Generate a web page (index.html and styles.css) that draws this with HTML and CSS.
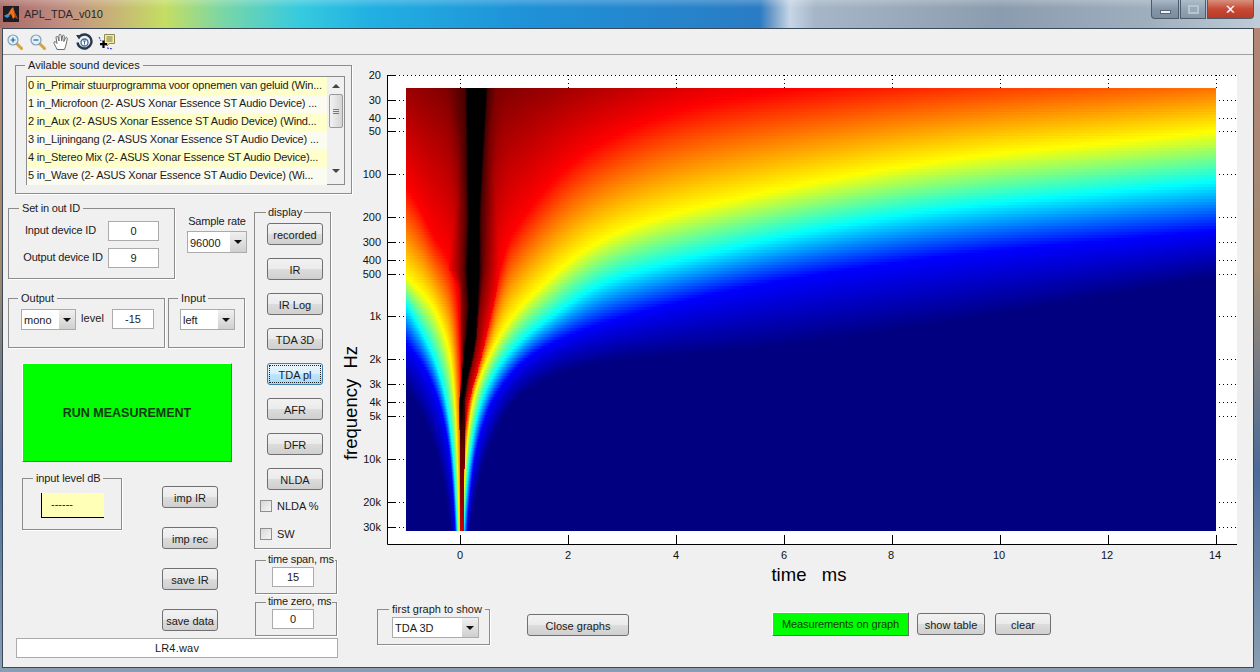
FILE: index.html
```html
<!DOCTYPE html>
<html lang="en">
<head>
<meta charset="utf-8">
<title>APL_TDA_v010</title>
<link rel="stylesheet" href="styles.css">
</head>
<body>
<div class="window">
  <header class="titlebar">
    <svg class="app-logo" width="16" height="16" viewBox="0 0 16 16">
      <rect width="16" height="16" fill="#1c1c22"/>
      <path d="M1 10 L5 8 L8 3 L10 1 L12 7 L15 13 L12 11 L10 13 L8 8 L5 10 Z" fill="#e8741c"/>
      <path d="M1 10 L5 8 L7 10 L4 12 Z" fill="#3f8fd0"/>
      <path d="M10 1 L12 7 L15 13 L12 11 Z" fill="#b83a14"/>
    </svg>
    <span class="title-text">APL_TDA_v010</span>
    <div class="win-buttons">
      <div class="win-btn win-min"><span class="min-glyph"></span></div>
      <div class="win-btn win-max"><span class="max-glyph"></span></div>
      <div class="win-btn win-close">&#x2715;</div>
    </div>
  </header>

  <div class="client">
    <div class="toolbar">
      <svg class="tool" width="18" height="18" viewBox="0 0 18 18">
        <path d="M10.5 10.5 L15.500 15.500" stroke="#d9a13c" stroke-width="3" stroke-linecap="round"/>
        <circle cx="7" cy="7" r="5" fill="#e4f1fa" stroke="#7d9fba" stroke-width="1.200"/>
        <path d="M4.500 7 H9.500 M7 4.500 V9.500" stroke="#2a5c94" stroke-width="1.200"/>
      </svg>
      <svg class="tool" width="18" height="18" viewBox="0 0 18 18">
        <path d="M10.5 10.5 L15.500 15.500" stroke="#d9a13c" stroke-width="3" stroke-linecap="round"/>
        <circle cx="7" cy="7" r="5" fill="#e4f1fa" stroke="#7d9fba" stroke-width="1.200"/>
        <path d="M4.500 7 H9.500" stroke="#2a5c94" stroke-width="1.200"/>
      </svg>
      <svg class="tool" width="18" height="18" viewBox="0 0 18 18">
        <path d="M5 16.500 C4 13.500 1.500 10.500 2 9 C2.700 8 4 9 5 10.500 L4 4.500 C4 3 5.800 3 6 4.500 L7 8 L7 2.500 C7 1 9 1 9.200 2.500 L9.700 8 L10.500 3 C10.800 1.700 12.500 2 12.300 3.500 L11.800 8.500 L13.500 5 C14 3.800 15.700 4.500 15.200 6 C14.500 9 14 13 12.500 16.500 Z" fill="#fff" stroke="#6a6a6a" stroke-width="1"/>
      </svg>
      <svg class="tool" width="18" height="18" viewBox="0 0 18 18">
        <path d="M4.500 3.500 A7 7 0 1 1 2.500 9.500" fill="none" stroke="#26384c" stroke-width="2.400"/>
        <path d="M1 2 L7 2 L4 6.500 Z" fill="#26384c"/>
        <circle cx="9.500" cy="9.500" r="3.500" fill="#fff" stroke="#3d6a96" stroke-width="1.300"/>
        <path d="M8 8 H11 M9.500 8 V11.500" stroke="#3d6a96" stroke-width="1"/>
      </svg>
      <svg class="tool" width="18" height="18" viewBox="0 0 18 18">
        <path d="M6.500 1.500 H16.500 V10.500 H11 L9 13 V10.500 H6.500 Z" fill="#f6eda0" stroke="#8f8a50" stroke-width="1"/>
        <path d="M8.500 4 H14.500 M8.500 6 H14.500 M8.500 8 H14.500" stroke="#77744a" stroke-width="1"/>
        <path d="M1 4 L3 8 M9 15 L15 16" stroke="#2030c0" stroke-width="1" stroke-dasharray="2 1"/>
        <path d="M5.500 7.500 V15 M2 11.200 H9" stroke="#000" stroke-width="2.200"/>
      </svg>
    </div>

    <div class="main">
      <section class="left">
        <div class="group devices">
          <span class="legend">Avilable sound devices</span>
          <div class="listbox">
            <ul class="list-rows">
              <li>0 in_Primair stuurprogramma voor opnemen van geluid (Win...</li>
              <li>1 in_Microfoon (2- ASUS Xonar Essence ST Audio Device) ...</li>
              <li>2 in_Aux (2- ASUS Xonar Essence ST Audio Device) (Wind...</li>
              <li>3 in_Lijningang (2- ASUS Xonar Essence ST Audio Device) ...</li>
              <li>4 in_Stereo Mix (2- ASUS Xonar Essence ST Audio Device)...</li>
              <li>5 in_Wave (2- ASUS Xonar Essence ST Audio Device) (Wi...</li>
            </ul>
            <div class="scrollbar">
              <span class="sb-up"></span>
              <div class="sb-thumb"><i></i><i></i><i></i></div>
              <span class="sb-down"></span>
            </div>
          </div>
        </div>

        <div class="mid">
          <div class="col-a">
            <div class="row-ids">
              <div class="group ids">
                <span class="legend">Set in out ID</span>
                <div class="id-row"><label class="id-label">Input device ID</label><input class="field field-id" value="0"></div>
                <div class="id-row"><label class="id-label id-label-out">Output device ID</label><input class="field field-id" value="9"></div>
              </div>
              <div class="rate">
                <span class="rate-label">Sample rate</span>
                <div class="select select-rate"><span>96000</span><b class="arrow"></b></div>
              </div>
            </div>

            <div class="row-io">
              <div class="group output">
                <span class="legend">Output</span>
                <div class="select select-mono"><span>mono</span><b class="arrow"></b></div>
                <span class="level-label">level</span>
                <input class="field field-level" value="-15">
              </div>
              <div class="group input-group">
                <span class="legend">Input</span>
                <div class="select select-mono"><span>left</span><b class="arrow"></b></div>
              </div>
            </div>

            <button class="run">RUN MEASUREMENT</button>

            <div class="row-level">
              <div class="group level">
                <span class="legend">input level dB</span>
                <div class="level-box">------</div>
              </div>
              <div class="side-buttons">
                <button class="btn btn-side">imp IR</button>
                <button class="btn btn-side">imp rec</button>
                <button class="btn btn-side">save IR</button>
                <button class="btn btn-side">save data</button>
              </div>
            </div>
          </div>

          <div class="col-b">
            <div class="group display">
              <span class="legend">display</span>
              <div class="display-buttons">
                <button class="btn btn-side">recorded</button>
                <button class="btn btn-side">IR</button>
                <button class="btn btn-side">IR Log</button>
                <button class="btn btn-side">TDA 3D</button>
                <button class="btn btn-side btn-active">TDA pl</button>
                <button class="btn btn-side">AFR</button>
                <button class="btn btn-side">DFR</button>
                <button class="btn btn-side">NLDA</button>
              </div>
              <div class="checks">
                <div class="check"><span class="box"></span>NLDA %</div>
                <div class="check"><span class="box"></span>SW</div>
              </div>
            </div>
            <div class="group time time-span">
              <span class="legend">time span, ms</span>
              <input class="field field-level" value="15">
            </div>
            <div class="group time time-zero">
              <span class="legend">time zero, ms</span>
              <input class="field field-level" value="0">
            </div>
          </div>
        </div>

        <div class="filebar">LR4.wav</div>
      </section>

      <section class="right">
        <div class="plot">
          <svg class="axes" width="905" height="530" viewBox="348 55 905 530">
            <rect x="387" y="75" width="850" height="469" fill="#fff"/>
            <g class="grid">
              <path d="M387 75.500H1237M387 100.500H1237M387 118.500H1237M387 131.500H1237M387 174.500H1237M387 217.500H1237M387 242.500H1237M387 260.500H1237M387 274.500H1237M387 316.500H1237M387 359.500H1237M387 384.500H1237M387 402.500H1237M387 416.500H1237M387 459.500H1237M387 502.500H1237M387 527.500H1237"/>
              <path d="M460.500 75V88M568.500 75V88M676.500 75V88M784.500 75V88M892.500 75V88M1000.500 75V88M1108.500 75V88M1216.500 75V88"/>
            </g>
            <g class="ticks">
              <path d="M387 75.500H396M387 100.500H395M387 118.500H395M387 131.500H395M387 174.500H395M387 217.500H395M387 242.500H395M387 260.500H395M387 274.500H395M387 316.500H395M387 359.500H395M387 384.500H395M387 402.500H395M387 416.500H395M387 459.500H395M387 502.500H395M387 527.500H395"/>
              <path d="M460.500 544V535M568.500 544V535M676.500 544V535M784.500 544V535M892.500 544V535M1000.500 544V535M1108.500 544V535M1216.500 544V535"/>
              <path d="M387.500 75V544.500H1237"/>
            </g>
            <g class="ylabels">
              <text x="381" y="79">20</text><text x="381" y="104">30</text><text x="381" y="122">40</text><text x="381" y="135">50</text>
              <text x="381" y="178">100</text><text x="381" y="221">200</text><text x="381" y="246">300</text><text x="381" y="264">400</text><text x="381" y="278">500</text>
              <text x="381" y="320">1k</text><text x="381" y="363">2k</text><text x="381" y="388">3k</text><text x="381" y="406">4k</text><text x="381" y="420">5k</text>
              <text x="381" y="463">10k</text><text x="381" y="506">20k</text><text x="381" y="531">30k</text>
            </g>
            <g class="xlabels">
              <text x="460" y="559">0</text><text x="568" y="559">2</text><text x="676" y="559">4</text><text x="784" y="559">6</text>
              <text x="891" y="559">8</text><text x="999" y="559">10</text><text x="1107" y="559">12</text><text x="1215" y="559">14</text>
            </g>
            <text class="axis-title" x="809" y="581">time&#160;&#160; ms</text>
            <text class="axis-title" transform="translate(357 403) rotate(-90)">frequency&#160; Hz</text>
          </svg>
          <canvas id="heatmap" class="heatmap" width="810" height="443"></canvas>
        </div>

        <div class="bottom-row">
          <div class="group first-graph">
            <span class="legend">first graph to show</span>
            <div class="select select-graph"><span>TDA 3D</span><b class="arrow"></b></div>
          </div>
          <button class="btn btn-close">Close graphs</button>
          <button class="measure">Measurements on graph</button>
          <button class="btn btn-table">show table</button>
          <button class="btn btn-clear">clear</button>
        </div>
      </section>
    </div>
  </div>
</div>
<script src="heatmap.js"></script>
</body>
</html>
```

FILE: styles.css
```css
* { box-sizing: border-box; }
html, body { margin: 0; padding: 0; }
body {
  width: 1260px;
  height: 672px;
  overflow: hidden;
  font-family: "Liberation Sans", Arial, sans-serif;
  font-size: 11px;
  color: #1a1a1a;
}
button, input { font-family: inherit; font-size: 11px; color: #1a1a1a; margin: 0; }

.window {
  width: 1260px;
  height: 672px;
  display: flex;
  flex-direction: column;
  background: linear-gradient(180deg, #b58578 0%, #a08a70 40%, #4a6a98 70%, #8a9fb4 100%);
}
.titlebar {
  height: 28px;
  flex: none;
  display: flex;
  align-items: flex-start;
  padding-left: 3px;
  background:
    linear-gradient(180deg, rgba(255,255,255,.22) 0, rgba(255,255,255,0) 8px),
    linear-gradient(90deg, #a86a66 0, #c08c80 60px, #c8b078 110px, #c4de62 165px, #78d6a8 225px, #36cadf 300px, #22b0e2 370px, #1f92d8 520px, #2a7cc4 760px, #6f9cc8 772px, #c6d6e6 790px, #a6b6c6 815px, #8b9cae 1000px, #a0afbe 1150px, #c0ccd8 1260px);
}
.app-logo { margin-top: 6px; flex: none; }
.title-text { margin: 7px 0 0 5px; font-size: 11px; line-height: 14px; color: #26262a; }
.win-buttons { margin-left: auto; margin-right: 6px; display: flex; gap: 1px; height: 19px; }
.win-btn {
  height: 19px;
  border: 1px solid #4e5a68;
  border-top: 0;
  display: flex;
  align-items: center;
  justify-content: center;
}
.win-min { width: 28px; border-bottom-left-radius: 4px; background: linear-gradient(180deg, #aab8c6, #8496a8 50%, #7a8c9e); }
.win-max { width: 26px; background: linear-gradient(180deg, #b0bdc9, #93a4b4 50%, #8596a6); }
.win-close {
  width: 47px;
  border-bottom-right-radius: 4px;
  background: linear-gradient(180deg, #d8907c, #c84a34 50%, #b83a28);
  color: #fff;
  font-size: 13px;
  font-weight: bold;
  font-family: "DejaVu Sans", sans-serif;
}
.min-glyph { width: 11px; height: 4px; margin-top: 5px; background: #eef2f6; border: 1px solid #5a6672; }
.max-glyph { width: 11px; height: 9px; border: 2px solid #b8c4ce; background: #9aa9b7; }

.client {
  width: 1252px;
  height: 640px;
  margin-left: 2px;
  border: 1px solid #3c4a58;
  background: #f0f0f0;
  display: flex;
  flex-direction: column;
}
.toolbar {
  height: 26px;
  flex: none;
  display: flex;
  align-items: center;
  gap: 5px;
  padding-left: 3px;
  border-bottom: 1px solid #a0a0a0;
}
.tool { flex: none; }
.main { flex: 1; display: flex; min-height: 0; }
.left { width: 345px; flex: none; }
.right { width: 905px; flex: none; }

.group { position: relative; border: 1px solid #8c8c8c; box-shadow: 1px 1px 0 #fff; }
.legend {
  position: absolute;
  top: -7px;
  left: 9px;
  padding: 0 3px;
  background: #f0f0f0;
  line-height: 13px;
  white-space: nowrap;
}

.devices { width: 337px; height: 129px; margin: 10px 0 0 12px; padding: 10px 0 0 10px; }
.devices .legend { left: 9px; }
.listbox { width: 319px; height: 109px; border: 1px solid #8c8c8c; display: flex; background: #fff; }
.list-rows { flex: 1; list-style: none; margin: 0; padding: 0; min-width: 0; }
.list-rows li {
  height: 18px;
  line-height: 16px;
  padding-left: 1px;
  white-space: nowrap;
  overflow: hidden;
  letter-spacing: -.17px;
  background: #fbfbf0;
}
.list-rows li:nth-child(odd) { background: #ffffcc; }
.scrollbar { width: 17px; flex: none; background: #f0f0f0; display: flex; flex-direction: column; align-items: center; }
.sb-up, .sb-down { width: 0; height: 0; border: 4px solid transparent; }
.sb-up { border-top: 0; border-bottom-color: #444; margin-top: 7px; }
.sb-down { border-bottom: 0; border-top-color: #444; margin-top: 41px; }
.sb-thumb {
  width: 14px;
  height: 34px;
  margin-top: 6px;
  border: 1px solid #9a9a9a;
  border-radius: 2px;
  background: linear-gradient(90deg, #f2f2f2, #d4d4d4);
  display: flex;
  flex-direction: column;
  align-items: center;
  justify-content: center;
  gap: 1px;
}
.sb-thumb i { width: 6px; height: 1px; background: #777; }

.mid { display: flex; margin: 14px 0 0 5px; }
.col-a { width: 239px; flex: none; }
.col-b { width: 83px; flex: none; margin: 4px 0 0 7px; }

.row-ids { display: flex; }
.ids { width: 167px; height: 71px; padding: 12px 15px 0 8px; }
.ids .legend { left: 10px; letter-spacing: -.2px; }
.id-row { display: flex; align-items: center; margin-bottom: 7px; }
.id-label { flex: 1; margin-bottom: 3px; text-align: center; letter-spacing: -.15px; white-space: nowrap; }
.id-label-out { padding-left: 5px; }
.field { border: 1px solid #ababab; background: #fff; text-align: center; padding: 0; outline: 0; }
.field-id { width: 51px; height: 20px; margin-left: 4px; flex: none; }
.rate { width: 60px; margin-left: 12px; }
.rate-label { display: block; height: 23px; line-height: 26px; white-space: nowrap; text-align: center; letter-spacing: -.15px; }

.select {
  display: flex;
  align-items: stretch;
  background: #fff;
  border: 1px solid #ababab;
  line-height: 20px;
  padding-left: 2px;
}
.select span { flex: 1; }
.arrow {
  width: 16px;
  flex: none;
  position: relative;
  background: linear-gradient(180deg, #f0f0f0, #cfcfcf);
}
.arrow::after {
  content: "";
  position: absolute;
  top: 8px;
  left: 4px;
  border: 4px solid transparent;
  border-bottom: 0;
  border-top-color: #111;
}
.select-rate { height: 22px; line-height: 22px; }
.select-mono { width: 55px; height: 21px; }
.select-graph { width: 87px; height: 21px; font-size: 11px; }

.row-io { display: flex; margin-top: 19px; }
.output { width: 157px; height: 50px; margin-right: 3px; padding: 10px 0 0 12px; display: flex; align-items: flex-start; }
.level-label { margin: 2px 0 0 5px; width: 31px; line-height: 14px; letter-spacing: .1px; }
.field-level { width: 42px; height: 20px; flex: none; }
.input-group { width: 77px; height: 50px; padding: 10px 0 0 11px; }

.run {
  display: block;
  width: 210px;
  height: 99px;
  margin: 15px 0 0 14px;
  padding: 0;
  background: #00ff00;
  border: 1px solid;
  border-color: #fff #6a6a6a #6a6a6a #fff;
  font-size: 12.500px;
  font-weight: bold;
  color: #103a10;
}

.row-level { display: flex; margin-top: 16px; }
.level { width: 100px; height: 52px; margin-left: 14px; padding: 14px 0 0 18px; flex: none; }
.level .legend { left: 10px; letter-spacing: -.12px; }
.level-box {
  width: 63px;
  height: 25px;
  padding-left: 9px;
  line-height: 22px;
  background: #ffffb8;
  border-left: 1px solid #000;
  border-bottom: 1px solid #000;
}
.side-buttons { width: 56px; margin: 8px 0 0 40px; display: flex; flex-direction: column; gap: 19px; }

.btn {
  height: 22px;
  padding: 2px 0 0;
  border: 1px solid #707070;
  border-radius: 3px;
  background: linear-gradient(180deg, #f2f2f2 0, #ebebeb 48%, #dcdcdc 52%, #cfcfcf 100%);
  white-space: nowrap;
}
.btn-side { width: 56px; flex: none; }
.btn-active {
  border-color: #3c7fb1;
  background: linear-gradient(180deg, #eaf6fd 0, #d9f0fc 48%, #bee6fd 52%, #a7d9f5 100%);
  outline: 1px dotted #222;
  outline-offset: -3px;
}

.display { width: 77px; height: 337px; padding: 10px 0 0 12px; }
.display .legend { left: 11px; padding: 0 2px; }
.display-buttons { display: flex; flex-direction: column; gap: 13px; }
.checks { margin: 10px 0 0 -7px; display: flex; flex-direction: column; gap: 16px; }
.check { display: flex; align-items: center; height: 12px; gap: 5px; white-space: nowrap; }
.box { width: 12px; height: 12px; border: 1px solid #8e8f8f; background: linear-gradient(135deg, #d8d8d8, #f6f6f6); flex: none; }

.time { width: 82px; height: 34px; margin-left: 1px; padding: 6px 0 0 16px; }
.time .legend { left: 10px; top: -8px; padding: 0 1px 0 2px; letter-spacing: -.2px; }
.time-span { margin-top: 11px; }
.time-zero { margin-top: 8px; }

.filebar {
  width: 322px;
  height: 20px;
  margin: 2px 0 0 13px;
  border: 1px solid #ababab;
  background: #fff;
  text-align: center;
  line-height: 18px;
  letter-spacing: .2px;
}

.plot { position: relative; height: 530px; }
.axes { display: block; overflow: visible; }
.heatmap { position: absolute; left: 58px; top: 33px; display: block; }
.grid path { fill: none; stroke: #000; stroke-width: 1; stroke-dasharray: 1 3; }
.ticks path { fill: none; stroke: #000; stroke-width: 1; }
.ylabels text { font-size: 11px; text-anchor: end; fill: #111; }
.xlabels text { font-size: 11px; text-anchor: middle; fill: #111; }
.axis-title { font-size: 18.500px; text-anchor: middle; fill: #000; }

.bottom-row { display: flex; align-items: flex-start; margin-top: 24px; }
.first-graph { width: 113px; height: 36px; margin-left: 29px; padding: 7px 0 0 14px; flex: none; }
.first-graph .legend { left: 11px; }
.btn-close { width: 102px; margin: 5px 0 0 37px; flex: none; }
.measure {
  width: 137px;
  height: 24px;
  margin: 3px 0 0 143px;
  padding: 0;
  flex: none;
  background: #00ff00;
  border: 1px solid;
  border-color: #fff #6a6a6a #6a6a6a #fff;
  letter-spacing: -.1px;
  color: #123c12;
}
.btn-table { width: 68px; margin: 4px 0 0 8px; flex: none; }
.btn-clear { width: 56px; margin: 4px 0 0 10px; flex: none; }
```

FILE: heatmap.js
```js
// Decay map. Side contours: [distance from t=0 in px, page y] where a colour-map value is reached.
(function () {
  var X0 = 406, Y0 = 88;
  var canvas = document.getElementById('heatmap');
  var ctx = canvas.getContext('2d');
  var W = canvas.width, H = canvas.height;

  var LEVELS = [0, .125, .375, .625, .875, 1];
  var RIGHT = [
    [[10,527],[27,455],[50,405],[100,372],[160,360],[300,350],[434,333],[541,315],[649,297],[756,276],[3540,88]],
    [[7,527],[15,455],[30,405],[70,355],[110,335],[180,312],[220,302],[327,279],[434,263],[541,249],[649,240],[756,233],[1940,135],[2740,88]],
    [[4,527],[10,455],[20,405],[47,355],[95,315],[137,285],[173,272],[220,261],[327,236],[434,215],[541,202],[649,192],[756,182],[1340,135],[1940,88]],
    [[2.7,527],[6,455],[12,405],[30,355],[62,305],[87,282],[120,252],[173,225],[220,212],[327,188],[434,167],[541,152],[649,142],[756,135],[1090,88]],
    [[1.5,527],[3,455],[8,405],[22,355],[37,290],[42,252],[73,205],[113,160],[230,105],[340,88]],
    [[1.2,527],[4,405],[13,355],[20,305],[25,268],[28,200],[30,140],[37,88],[100,60],[300,20]]
  ];
  var LEFT = [
    [[11,527],[24,455],[55,388],[120,300],[1000,88]],
    [[6,527],[11,455],[21,405],[44,355],[55,345],[200,200],[800,88]],
    [[4,527],[8,455],[14,405],[28,355],[41,330],[54,305],[150,230],[500,88]],
    [[2,527],[4,455],[6,405],[11,355],[18,330],[29,305],[55,278],[150,200],[400,88]],
    [[.3,400],[1.5,330],[5,285],[29,235],[56,185],[160,88]],
    [[.3,230],[2,150],[4,140],[15,88],[60,60]]
  ];

  var L4 = [[88,300],[185,406],[235,433],[285,457],[315,460],[355,462],[405,459],[455,460],[527,460]];
  var DL = [[88,447],[140,458],[200,462],[270,461],[315,463],[355,463],[405,459.5],[527,460.2]];
  var CL = [[88,468],[174,469],[217,470],[270,468],[305,470],[335,468],[355,465],[380,462],[400,460.5],[527,460.5]];
  var CR = [[88,485],[174,480],[217,478],[270,478],[305,476],[335,474],[355,471],[380,465],[400,462],[527,461]];
  var DR = [[88,497],[140,490],[200,488],[268,485],[305,480],[355,473],[405,464],[527,461.2]];
  var R4 = [[88,800],[105,690],[152,600],[205,533],[252,502],[290,497],[355,482],[405,468],[455,463],[527,461.5]];
  var PEAK = [[88,1.4],[395,1.4],[450,1.06],[527,0.93]];

  function lin(list, t) {
    for (var i = 1; i < list.length; i++) {
      if (t <= list[i][0] || i === list.length - 1) {
        var a = list[i - 1], b = list[i];
        return a[1] + (b[1] - a[1]) * (t - a[0]) / (b[0] - a[0]);
      }
    }
  }
  function logTable(list) {
    return list.map(function (p) { return [Math.log(p[0]), p[1]]; });
  }
  function smooth(table, ld) {
    var s = 0;
    for (var k = -4; k <= 4; k++) s += lin(table, ld + k * 0.05);
    return s / 9;
  }
  function clamp(v) { return v < 0 ? 0 : v > 1 ? 1 : v; }

  var rightT = RIGHT.map(logTable), leftT = LEFT.map(logTable);

  function columnContours(x) {
    var left = x < 461;
    var d = Math.max(0.3, left ? 461 - x : x - 460);
    var tables = left ? leftT : rightT;
    var ld = Math.log(d), ys = [], prev = Infinity;
    for (var i = 0; i < tables.length; i++) {
      var y = Math.min(prev - 0.01, smooth(tables[i], ld));
      ys.push(y);
      prev = y;
    }
    return ys;
  }
  function sideValue(ys, y) {
    if (y >= ys[0]) return 0;
    for (var i = 1; i < ys.length; i++) {
      if (y >= ys[i]) return LEVELS[i] + (LEVELS[i - 1] - LEVELS[i]) * (y - ys[i]) / (ys[i - 1] - ys[i]);
    }
    return 1;
  }
  function coreValue(x, a, v) {
    if (x <= a[0] || x >= a[a.length - 1]) return 0;
    for (var j = 1; j < a.length; j++) {
      if (x <= a[j]) return v[j - 1] + (v[j] - v[j - 1]) * (x - a[j - 1]) / (a[j] - a[j - 1]);
    }
    return 0;
  }

  var cols = [];
  for (var c = 0; c < W; c++) cols.push(columnContours(X0 + c + 0.5));

  var img = ctx.createImageData(W, H);
  for (var row = 0; row < H; row += 3) {
    var y = Y0 + row + 1;
    var peak = lin(PEAK, y), cl = lin(CL, y), cr = lin(CR, y);
    var dl = lin(DL, y), dr = lin(DR, y);
    var halo = Math.min(peak, 1.14), edge = Math.min(1, Math.max(peak, .875));
    var a = [Math.max(lin(L4, y), dl - 12), dl, cl - 3, cl, cr, cr + 3, dr, Math.min(lin(R4, y), dr + 15)];
    var v2 = [.875, edge, halo, peak, peak, halo, edge, .875];
    for (var k = 1; k < a.length; k++) if (a[k] <= a[k - 1]) a[k] = a[k - 1] + 0.02;
    for (var col = 0; col < W; col++) {
      var x = X0 + col + 0.5;
      var v = Math.max(sideValue(cols[col], y), coreValue(x, a, v2));
      var r, g, b;
      if (v > 1) {
        r = 0.5 * clamp(1 - (v - 1) / 0.32); g = 0; b = 0;
      } else {
        r = clamp(1.5 - Math.abs(4 * v - 3));
        g = clamp(1.5 - Math.abs(4 * v - 2));
        b = clamp(1.5 - Math.abs(4 * v - 1));
      }
      for (var h = 0; h < 3 && row + h < H; h++) {
        var p = ((row + h) * W + col) * 4;
        img.data[p] = r * 255; img.data[p + 1] = g * 255; img.data[p + 2] = b * 255; img.data[p + 3] = 255;
      }
    }
  }
  ctx.putImageData(img, 0, 0);
})();
```
